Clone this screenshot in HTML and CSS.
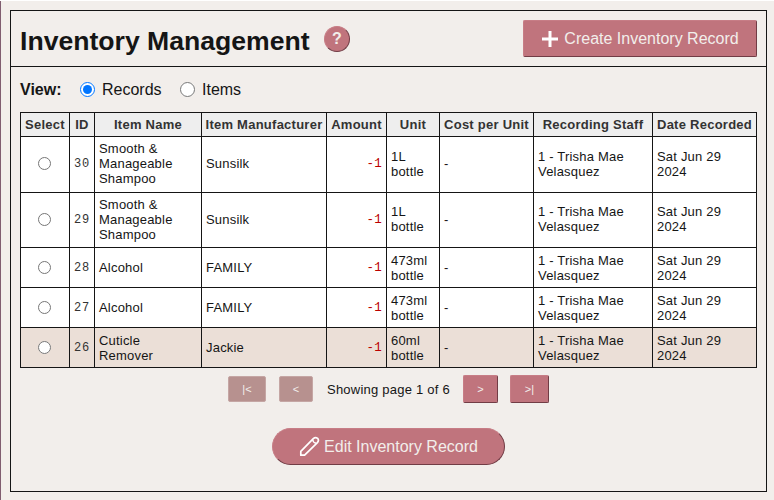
FILE: index.html
```html
<!DOCTYPE html>
<html lang="en">
<head>
<meta charset="utf-8">
<title>Inventory Management</title>
<link rel="stylesheet" href="styles.css">
</head>
<body>
<main class="page">
  <section class="panel">
    <header class="panel-header">
      <h1>Inventory Management</h1>
      <button class="btn help">?</button>
      <button class="btn create">
        <svg class="plus" width="18" height="18" viewBox="0 0 18 18"><path d="M9 1v16M1 9h16" stroke="#fff" stroke-width="3"/></svg>
        <span>Create Inventory Record</span>
      </button>
    </header>
    <div class="panel-body">
      <div class="view">
        <b>View:</b>
        <label><input type="radio" name="view" checked><span class="records">Records</span></label>
        <label><input type="radio" name="view"><span>Items</span></label>
      </div>
      <table>
        <colgroup><col class="c1"><col class="c2"><col class="c3"><col class="c4"><col class="c5"><col class="c6"><col class="c7"><col class="c8"><col class="c9"></colgroup>
        <thead>
          <tr><th>Select</th><th>ID</th><th>Item Name</th><th>Item Manufacturer</th><th>Amount</th><th>Unit</th><th>Cost per Unit</th><th>Recording Staff</th><th>Date Recorded</th></tr>
        </thead>
        <tbody>
          <tr class="tall first"><td class="sel"><input type="radio" name="row"></td><td class="id">30</td><td>Smooth &amp;<br>Manageable<br>Shampoo</td><td>Sunsilk</td><td class="amount">-1</td><td>1L<br>bottle</td><td>-</td><td>1 - Trisha Mae<br>Velasquez</td><td>Sat Jun 29<br>2024</td></tr>
          <tr class="tall"><td class="sel"><input type="radio" name="row"></td><td class="id">29</td><td>Smooth &amp;<br>Manageable<br>Shampoo</td><td>Sunsilk</td><td class="amount">-1</td><td>1L<br>bottle</td><td>-</td><td>1 - Trisha Mae<br>Velasquez</td><td>Sat Jun 29<br>2024</td></tr>
          <tr><td class="sel"><input type="radio" name="row"></td><td class="id">28</td><td>Alcohol</td><td>FAMILY</td><td class="amount">-1</td><td>473ml<br>bottle</td><td>-</td><td>1 - Trisha Mae<br>Velasquez</td><td>Sat Jun 29<br>2024</td></tr>
          <tr><td class="sel"><input type="radio" name="row"></td><td class="id">27</td><td>Alcohol</td><td>FAMILY</td><td class="amount">-1</td><td>473ml<br>bottle</td><td>-</td><td>1 - Trisha Mae<br>Velasquez</td><td>Sat Jun 29<br>2024</td></tr>
          <tr class="active"><td class="sel"><input type="radio" name="row"></td><td class="id">26</td><td>Cuticle<br>Remover</td><td>Jackie</td><td class="amount">-1</td><td>60ml<br>bottle</td><td>-</td><td>1 - Trisha Mae<br>Velasquez</td><td>Sat Jun 29<br>2024</td></tr>
        </tbody>
      </table>
      <nav class="pager">
        <button class="btn pg first-pg" disabled>|&lt;</button>
        <button class="btn pg prev-pg" disabled>&lt;</button>
        <span class="status">Showing page 1 of 6</span>
        <button class="btn pg next-pg">&gt;</button>
        <button class="btn pg last-pg">&gt;|</button>
      </nav>
      <button class="btn edit">
        <svg width="21" height="21" viewBox="0 0 21 21" fill="none" stroke="#fff" stroke-width="1.7" stroke-linejoin="round"><path d="M1.800 19.200V15.400L14.300 2.600Q16.400 .6 18.600 2.300Q20.300 4.500 18.400 6.600L5.600 19.200z"/><path d="M13.600 3.500Q14 6.800 17.400 7.300" stroke-width="1.400"/></svg>
        <span>Edit Inventory Record</span>
      </button>
    </div>
  </section>
</main>
</body>
</html>
```
FILE: styles.css
```css
* { box-sizing: border-box; }
body {
  margin: 0;
  height: 500px;
  padding-top: 1px;
  background: #fff;
  color: #151515;
  font-family: "Liberation Sans", Arial, sans-serif;
  overflow: hidden;
}
.page {
  height: 499px;
  padding: 9px 7px 8px 9px;
  background: #f2eeeb;
  border-left: 1px solid #805d70;
}
.panel { height: 482px; border: 1px solid #151515; }
.panel-header {
  display: flex;
  align-items: center;
  height: 56px;
  padding: 0 9px;
  border-bottom: 1px solid #151515;
}
h1 {
  margin: 4px 14px 0 0;
  width: 290px;
  font-size: 26.6px;
  line-height: 32px;
  white-space: nowrap;
}
.btn {
  display: flex;
  align-items: center;
  justify-content: center;
  margin: 0;
  padding: 0;
  border: 1px solid;
  border-color: #c77d86 #713c45 #713c45 #c77d86;
  border-radius: 2px;
  background: #c0747d;
  color: #f2eeeb;
  font-family: inherit;
  white-space: nowrap;
}
.help { width: 26px; height: 26px; border-radius: 50%; font-size: 16px; font-weight: bold; }
.create { width: 234px; height: 37px; margin-left: auto; gap: 5px; font-size: 16px; }
.panel-body { padding: 0 9px; }
.view { display: flex; align-items: center; height: 45px; font-size: 16px; }
.view b { width: 60px; }
.view label { display: flex; align-items: center; }
.view input { width: 15px; height: 15px; margin: 0 7px 0 0; }
.records { width: 78px; }
table {
  width: 737px;
  table-layout: fixed;
  border-collapse: separate;
  border-spacing: 1px;
  background: #151515;
  font-size: 13px;
  line-height: 15px;
  letter-spacing: 0.2px;
}
.c1 { width: 48px; } .c2 { width: 24px; } .c3 { width: 106px; }
.c4 { width: 124px; } .c5 { width: 59px; } .c6 { width: 52px; }
.c7 { width: 93px; } .c8 { width: 118px; } .c9 { width: 103px; }
th { height: 23px; padding: 0; background: #eee; color: #333; letter-spacing: 0.25px; white-space: nowrap; }
td { height: 39px; padding: 0 4px; background: #fff; white-space: nowrap; }
.tall td { height: 54px; padding-bottom: 2px; }
.first td { height: 55px; }
.active td { background: #ebdfd7; }
td.sel { padding-left: 0; padding-right: 1px; }
.sel input { display: block; width: 13px; height: 13px; margin: 0 auto; }
td.id, td.amount { padding-top: 2px; font-family: "Liberation Mono", monospace; }
.id { color: #333; font-size: 12px; letter-spacing: 0.9px; }
.amount { text-align: right; color: #b00; font-size: 12.5px; }
.pager { display: flex; align-items: center; height: 28px; margin: 7px 0 0 208px; font-size: 13px; }
.pg { height: 28px; font-size: 11px; }
.pg:disabled { height: 26px; background: #b7918f; border-color: #c5a6a4; }
.first-pg { width: 38px; margin-right: 13px; }
.prev-pg { width: 34px; margin-right: 14px; }
.status { width: 136px; letter-spacing: 0.23px; }
.next-pg { width: 35px; margin-right: 12px; }
.last-pg { width: 39px; }
.edit { width: 233px; height: 37px; margin: 25px 0 0 252px; gap: 4px; border-radius: 19px; font-size: 16px; }
```
